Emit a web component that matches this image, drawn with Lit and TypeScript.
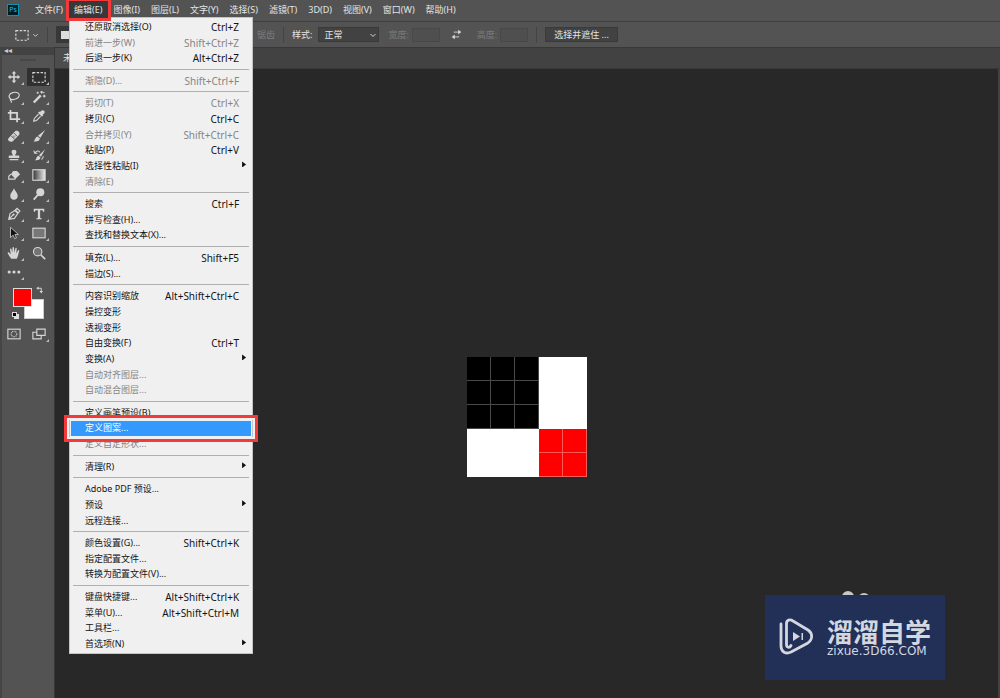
import { LitElement, html, svg, css, nothing } from "lit";
import { customElement, property } from "lit/decorators.js";
import { classMap } from "lit/directives/class-map.js";

interface Command {
  label: string;
  keys?: string;
  off?: boolean;
  sub?: boolean;
  active?: boolean;
}

const titles = ["文件(F)", "编辑(E)", "图像(I)", "图层(L)", "文字(Y)", "选择(S)", "滤镜(T)", "3D(D)", "视图(V)", "窗口(W)", "帮助(H)"];

const groups: Command[][] = [
  [
    { label: "还原取消选择(O)", keys: "Ctrl+Z" },
    { label: "前进一步(W)", keys: "Shift+Ctrl+Z", off: true },
    { label: "后退一步(K)", keys: "Alt+Ctrl+Z" },
  ],
  [{ label: "渐隐(D)...", keys: "Shift+Ctrl+F", off: true }],
  [
    { label: "剪切(T)", keys: "Ctrl+X", off: true },
    { label: "拷贝(C)", keys: "Ctrl+C" },
    { label: "合并拷贝(Y)", keys: "Shift+Ctrl+C", off: true },
    { label: "粘贴(P)", keys: "Ctrl+V" },
    { label: "选择性粘贴(I)", sub: true },
    { label: "清除(E)", off: true },
  ],
  [
    { label: "搜索", keys: "Ctrl+F" },
    { label: "拼写检查(H)..." },
    { label: "查找和替换文本(X)..." },
  ],
  [{ label: "填充(L)...", keys: "Shift+F5" }, { label: "描边(S)..." }],
  [
    { label: "内容识别缩放", keys: "Alt+Shift+Ctrl+C" },
    { label: "操控变形" },
    { label: "透视变形" },
    { label: "自由变换(F)", keys: "Ctrl+T" },
    { label: "变换(A)", sub: true },
    { label: "自动对齐图层...", off: true },
    { label: "自动混合图层...", off: true },
  ],
  [
    { label: "定义画笔预设(B)" },
    { label: "定义图案...", active: true },
    { label: "定义自定形状...", off: true },
  ],
  [{ label: "清理(R)", sub: true }],
  [{ label: "Adobe PDF 预设..." }, { label: "预设", sub: true }, { label: "远程连接..." }],
  [
    { label: "颜色设置(G)...", keys: "Shift+Ctrl+K" },
    { label: "指定配置文件..." },
    { label: "转换为配置文件(V)..." },
  ],
  [
    { label: "键盘快捷键...", keys: "Alt+Shift+Ctrl+K" },
    { label: "菜单(U)...", keys: "Alt+Shift+Ctrl+M" },
    { label: "工具栏..." },
    { label: "首选项(N)", sub: true },
  ],
];

/* Glyphs are drawn on a 16 by 16 grid; classes f and s mean filled and stroked. */
const glyphs: Record<string, unknown> = {
  move: svg`<path class="f" d="M8 1l2.600 3H8.900v3.100H12V5.400L15 8l-3 2.600V8.900H8.900V12h1.700L8 15l-2.600-3h1.700V8.900H4v1.700L1 8l3-2.600v1.700h3.100V4H5.400z"/>`,
  marquee: svg`<rect class="s" x="1" y="3" width="14" height="11" stroke-dasharray="2.800 1.600"/>`,
  lasso: svg`<path class="s" d="M4.500 10.500C1 8.600 2 4.300 6.500 3 11 1.800 14.500 3.600 14 6.500c-.5 3-5.200 5.200-9 4.200-1.700-.4-1.400 1.300-.6 1.500.9.300.9 1.400.2 2.200"/>`,
  wand: svg`<path class="f" d="M1 13.300L9 5.200 11 7.200 3 15.200z"/><path class="s" d="M11 1v3M9.500 2.500h3M14 5.500v3M12.500 7h3M6.500 2v2.400M5.300 3.200h2.400M13 3.500l1-1"/>`,
  crop: svg`<path class="s b" d="M4 1v10.500h11M1 4.500h10.500V15"/>`,
  dropper: svg`<path class="f" d="M10 2.600c1.300-1.700 3-1.500 3.900-.7.900.9.900 2.500-.7 3.700l-1 1 .6.700-1.500 1.500-4.500-4.500 1.500-1.500.7.700z"/><path class="s" d="M7.400 6L2.700 10.800 2 13.900l3.200-.8 4.600-4.700"/>`,
  heal: svg`<path class="f" d="M1.700 10.700l7.600-8.200c2.800-1.700 6 1.300 4.700 4l-7.700 7.700c-3.200 1.300-6.300-1-4.600-3.500z"/><path class="k" d="M4.700 7.800l4 4M7.800 4.500l4 4M7 7.600v1.200M9 7.600v1.200M8 9.500v1"/>`,
  brush: svg`<path class="f" d="M15 1L9.600 10 6.900 7.800zM6.300 8.500l2.600 2.200c.1 2.900-2.900 4.300-7.400 3.500 2.300-.8 1.600-4.700 4.800-5.700z"/>`,
  stamp: svg`<path class="f" d="M6.700 8.700c.2-1.300-1.500-2.600-1.500-4.200C5.200 3 6.400 2 8 2s2.800 1 2.800 2.500c0 1.600-1.700 2.900-1.500 4.200h3.900c.6 0 .8.400.8.800v2H2v-2c0-.5.300-.8.800-.8zM3 12.500h10V14H3z"/>`,
  history: svg`<path class="f" d="M15 1.500L10.300 10 8 8.200zM7.400 8.800l2.200 1.800c.1 2.500-2 4-6.400 3.400 2-.7 1.600-4.500 4.200-5.200z"/><path class="s" d="M2 3l1.200 3h3M3.200 6C5 2.800 8 2.600 9 5M12.800 9.500c0 2-.8 3-2 3.700"/>`,
  eraser: svg`<path class="f" d="M7 3.500h4.500L15 7 9.500 12.500 4.500 7z"/><path class="s" d="M4.500 7L2 9.500v3.200h7l.8-.8"/>`,
  gradient: svg`<defs><linearGradient id="fade"><stop offset="0" stop-color="#333"/><stop offset="1" stop-color="#eee"/></linearGradient></defs><rect class="s" x="1" y="2" width="14" height="12" style="fill:url(#fade)"/>`,
  blur: svg`<path class="f" d="M8 1.500c1 3 4.300 5.700 4.300 8.500S10.300 14.500 8 14.500 3.700 12.800 3.700 10 7 4.500 8 1.500z"/>`,
  dodge: svg`<circle class="f" cx="9.500" cy="6" r="4.600"/><path class="s b" d="M6.500 9.300L2 14.500"/>`,
  pen: svg`<path class="s" d="M2 14l1.500-6.500L9 4l3.300 3.400L8.500 13zM2 14l5-5M9.600 3.400L11.500 1.500l3.200 3.200-1.900 2z"/><circle class="f" cx="7.600" cy="8.600" r="1.200"/>`,
  type: svg`<path class="f" d="M2 2h12v3.500h-1.300c-.1-1.300-.6-1.900-1.900-1.900H9.300v8c0 1 .3 1.200 1.700 1.200V14H5v-1.200c1.400 0 1.700-.2 1.700-1.200v-8H5.200c-1.300 0-1.800.6-1.900 1.900H2z"/>`,
  select: svg`<path d="M4 1.500v11.700l3-2.700 1.800 4 2-.9L9 9.700h4z" fill="#111" stroke="#d6d6d6" stroke-width=".9"/>`,
  shape: svg`<rect class="s" x="1" y="2.500" width="14" height="11" style="fill:#777"/>`,
  hand: svg`<path class="f" d="M4.800 14.500C3 12 1.700 10.200.8 8.300c-.3-1 .8-1.500 1.500-.8l2 2.300-.9-6c0-1.200 1.300-1.300 1.600-.3L6 7.800 6.300 2c.1-1.100 1.500-1.100 1.700 0l.4 5.700 1.200-5c.3-1.100 1.600-.8 1.500.3l-.5 5.500 1.900-3.500c.6-.9 1.700-.3 1.400.7-.8 3-1.200 6.600-2.900 8.800z"/>`,
  zoom: svg`<circle class="s" cx="6.500" cy="6.500" r="4.800" style="fill:#737373"/><path class="s b" d="M10 10l5 5"/>`,
  more: svg`<circle class="f" cx="2.500" cy="8" r="1.800"/><circle class="f" cx="8" cy="8" r="1.800"/><circle class="f" cx="13.500" cy="8" r="1.800"/>`,
  mask: svg`<rect class="s" x="1" y="2.500" width="14" height="11"/><circle class="s" cx="8" cy="8" r="3.200" stroke-dasharray="1 .8"/>`,
  screen: svg`<path class="s" d="M5.500 2.500H15v7H5.500zM5 6H1v7.500h9.500V10"/>`,
  swap: svg`<path class="s b" d="M3 4.500h7.500V11"/><path class="f" d="M5 1v7L.5 4.500zM7 10h7l-3.500 5z"/>`,
  arrows: svg`<path class="s" d="M4 4.500h9M12 11.500H3"/><path class="f" d="M10.500 1l4.500 3.500L10.500 8zM5.500 8L1 11.500 5.500 15z"/>`,
  chevron: svg`<path class="s b" d="M3 6l5 5 5-5"/>`,
};

const tools = [
  ["move", "移动"], ["marquee", "矩形选框"], ["lasso", "套索"], ["wand", "魔棒"],
  ["crop", "裁剪"], ["dropper", "吸管"], ["heal", "修复画笔"], ["brush", "画笔"],
  ["stamp", "仿制图章"], ["history", "历史记录画笔"], ["eraser", "橡皮擦"], ["gradient", "渐变"],
  ["blur", "模糊"], ["dodge", "减淡"], ["pen", "钢笔"], ["type", "横排文字"],
  ["select", "路径选择"], ["shape", "矩形"], ["hand", "抓手"], ["zoom", "缩放"], ["more", "编辑工具栏"],
];

const glyphStyles = css`
  .glyph { display: block; width: 14px; height: 14px; flex: none; }
  .glyph.small { width: 8px; height: 8px; }
  .f { fill: #d6d6d6; }
  .s { fill: none; stroke: #d6d6d6; stroke-width: 1.3; }
  .b { stroke-width: 2; }
  .k { fill: none; stroke: #535353; stroke-width: 1; }
  button, select, input { font: inherit; color: inherit; margin: 0; padding: 0; border: 0; background: none; box-sizing: border-box; }
`;

const glyph = (name: string, small = false) =>
  html`<svg class=${classMap({ glyph: true, small })} viewBox="0 0 16 16" aria-hidden="true">${glyphs[name]}</svg>`;

@customElement("edit-menu")
class EditMenu extends LitElement {
  static styles = [glyphStyles, css`
    :host {
      display: flex; flex-direction: column; box-sizing: border-box;
      width: 184px; max-height: calc(100vh - 61px); padding: 1px;
      background: #f0f0f0; border: 1px solid #c4c4c4; color: #141414;
    }
    .command {
      flex: 0 1 16px; min-height: 0; position: relative;
      display: flex; justify-content: space-between; align-items: center;
      padding: 0 12px 0 14px; line-height: 14px; text-align: left; white-space: nowrap;
    }
    .command:disabled { color: #858585; }
    .keys { font-size: 10px; }
    .active { background: #3399ff; color: #fff; z-index: 1; }
    .active::after {
      content: ""; position: absolute; inset: -6px -7px;
      border: 3px solid #f23a3a; box-shadow: inset 0 0 0 2px #f0f0f0; pointer-events: none;
    }
    .arrow { width: 4px; height: 6px; margin: 0 -7px 3px 0; background: #111; clip-path: polygon(0 0, 100% 50%, 0 100%); }
    .line { flex: 0 1 7px; min-height: 0; margin: 0 2px; border: 0; display: flex; align-items: center; }
    .line::before { content: ""; flex: 1; height: 1px; background: #b0b0b0; }
  `];

  render() {
    return groups.map((group, i) => html`
      ${i ? html`<hr class="line">` : nothing}
      ${group.map(c => html`
        <button class=${classMap({ command: true, active: !!c.active })} role="menuitem" ?disabled=${c.off}>
          <span>${c.label}</span>
          ${c.keys ? html`<span class="keys">${c.keys}</span>` : nothing}
          ${c.sub ? html`<span class="arrow"></span>` : nothing}
        </button>`)}
    `);
  }
}

@customElement("tool-panel")
class ToolPanel extends LitElement {
  @property() current = "marquee";

  static styles = [glyphStyles, css`
    :host { display: block; background: #535353; border-left: 2px solid #454545; border-right: 1px solid #383838; box-sizing: border-box; width: 55px; }
    .head { height: 8px; background: #424242; color: #ccc; font-size: 8px; line-height: 6px; padding-left: 2px; }
    .grip { width: 16px; height: 2px; margin: 4px auto 7px; background: #484848; }
    .tools { display: grid; grid-template-columns: 25px 25px; grid-auto-rows: 20px 19px; }
    .tool { position: relative; display: grid; place-items: center; width: 23px; height: 18px; border-radius: 1px; }
    .tool.on { background: #303030; }
    .tool.fly::after { content: ""; position: absolute; right: 1px; bottom: 1px; width: 3px; height: 3px; background: #bbb; clip-path: polygon(100% 0, 100% 100%, 0 100%); }
    .colors { display: grid; grid-template: 11px 8px 12px / 11px 8px 12px; margin: 5px 0 6px 11px; width: 31px; position: relative; }
    .back { grid-area: 2 / 2 / 4 / 4; background: #fff; border: 1px solid #ccc; }
    .fore { grid-area: 1 / 1 / 3 / 3; background: #f00; border: 1px solid #ddd; z-index: 1; }
    .swap { position: absolute; left: 23px; top: -2px; }
    .reset { position: absolute; left: -1px; top: 24px; width: 5px; height: 5px; background: #000; border: 1px solid #ddd; box-shadow: 2px 2px 0 #ddd; }
    .modes { display: grid; grid-template-columns: 25px 25px; }
  `];

  render() {
    return html`
      <div class="head">◂◂</div>
      <div class="grip"></div>
      <div class="tools">
        ${tools.map(([name, label]) => html`
          <button class=${classMap({ tool: true, on: name === this.current, fly: name !== "zoom" })} aria-label=${label}>${glyph(name)}</button>`)}
      </div>
      <div class="colors">
        <button class="fore" aria-label="前景色"></button>
        <button class="back" aria-label="背景色"></button>
        <button class="swap" aria-label="切换颜色">${glyph("swap", true)}</button>
        <button class="reset" aria-label="默认颜色"></button>
      </div>
      <div class="modes">
        <button class="tool" aria-label="快速蒙版">${glyph("mask")}</button>
        <button class="tool fly" aria-label="屏幕模式">${glyph("screen")}</button>
      </div>`;
  }
}

@customElement("app-root")
class AppRoot extends LitElement {
  static styles = [glyphStyles, css`
    :host {
      display: grid; grid-template-rows: 21px 26px 1fr; min-height: 100vh; position: relative; overflow: hidden;
      background: #282828; color: #e4e4e4; font: 9px "Noto Sans", "Noto Sans CJK SC", sans-serif;
    }
    .menubar { display: flex; align-items: center; background: #535353; padding-left: 7px; white-space: nowrap; }
    .logo { width: 12px; height: 12px; box-sizing: border-box; border: 1px solid #0a93b8; background: #001d26; color: #19c4ef; font-size: 7px; line-height: 9px; text-align: center; margin: 0 11px 2px 0; }
    .entry { position: relative; }
    .title { height: 17px; padding: 0 6px 0 5px; display: block; line-height: 16px; margin-bottom: 2px; }
    .title.open { background: #383838; outline: 3px solid #f23a3a; position: relative; z-index: 3; }
    .menu { position: absolute; left: 0; top: 16px; z-index: 2; }
    .options { display: flex; align-items: center; background: #535353; border-top: 1px solid #3f3f3f; box-sizing: border-box; padding-left: 15px; white-space: nowrap; }
    .preset { display: flex; align-items: center; gap: 3px; }
    .preset .small { width: 7px; }
    .split { width: 1px; height: 16px; background: #444; margin: 0 8px; }
    .modes { display: flex; gap: 4px; width: 201px; }
    .mode { width: 17px; height: 17px; background: #383838; display: grid; place-items: center; }
    .mode::before { content: ""; width: 8px; height: 8px; background: #ddd; }
    .dim { color: #7b7b7b; }
    .style { position: relative; display: flex; align-items: center; margin: 0 9px 0 6px; }
    .style .glyph { position: absolute; right: 2px; top: 4px; pointer-events: none; }
    .pick { appearance: none; width: 61px; height: 15px; background: #424242; border: 1px solid #3a3a3a; padding-left: 5px; line-height: 13px; }
    .field { width: 28px; height: 14px; border: 1px solid #484848; background: #4f4f4f; margin-left: 3px; }
    .swap { margin: 0 15px 0 11px; }
    .swap .glyph { width: 11px; height: 11px; }
    .refine { height: 15px; padding: 0 8px; background: #424242; border: 1px solid #3a3a3a; line-height: 13px; }
    .body { display: grid; grid-template-columns: auto 1fr; min-height: 0; }
    .window { display: grid; grid-template-rows: 22px 1fr; }
    .tabs { background: #424242; border-top: 1px solid #383838; border-bottom: 1px solid #383838; box-sizing: border-box; }
    .tab { display: block; width: 180px; height: 20px; background: #4d4d4d; line-height: 20px; padding-left: 8px; text-align: left; }
    .stage { display: grid; place-items: center; padding-top: 66px; border-right: 2px solid #424242; }
    .art { display: grid; grid-template: repeat(5, 24px) / repeat(5, 24px); background: #fff; }
    .ink, .red { display: block; box-sizing: border-box; border: solid #4a4a4a; border-width: 0 1px 1px 0; background: #000; }
    .red { background: #f00; border-color: #ff5a5a; }
    .badge { position: absolute; right: 55px; bottom: 18px; }
    .peek { display: block; width: 28px; height: 4px; margin-left: 77px; }
    .card { width: 180px; height: 85px; box-sizing: border-box; background: #223058; color: #d3d7e0; display: flex; align-items: center; gap: 13px; padding: 0 0 2px 14px; }
    .play { width: 35px; height: 37px; flex: none; }
    .name { font: 700 26px/28px "Noto Sans CJK SC", sans-serif; white-space: nowrap; }
    .site { font: 12px/12px "DejaVu Sans", sans-serif; }
  `];

  render() {
    const cells = Array.from({ length: 25 }, (_, i) => {
      const x = i % 5, y = Math.floor(i / 5);
      return x < 3 && y < 3 ? "ink" : x > 2 && y > 2 ? "red" : "";
    });
    return html`
      <nav class="menubar">
        <span class="logo">Ps</span>
        ${titles.map((t, i) => html`
          <div class="entry">
            <button class=${classMap({ title: true, open: i === 1 })}>${t}</button>
            ${i === 1 ? html`<edit-menu class="menu" role="menu"></edit-menu>` : nothing}
          </div>`)}
      </nav>
      <div class="options">
        <button class="preset" aria-label="工具预设">${glyph("marquee")}${glyph("chevron", true)}</button>
        <span class="split"></span>
        <div class="modes"><button class="mode" aria-label="新选区"></button></div>
        <span class="dim">锯齿</span>
        <span class="split"></span>
        <label for="style">样式:</label>
        <div class="style"><select class="pick" id="style"><option>正常</option></select>${glyph("chevron", true)}</div>
        <label class="dim" for="w">宽度:</label><input class="field" id="w" disabled>
        <button class="swap" aria-label="互换宽高">${glyph("arrows")}</button>
        <label class="dim" for="h">高度:</label><input class="field" id="h" disabled>
        <span class="split"></span>
        <button class="refine">选择并遮住 ...</button>
      </div>
      <div class="body">
        <tool-panel></tool-panel>
        <main class="window">
          <div class="tabs"><button class="tab">未</button></div>
          <div class="stage"><div class="art">${cells.map(c => html`<i class=${c}></i>`)}</div></div>
        </main>
      </div>
      <aside class="badge">
        <svg class="peek" viewBox="0 0 28 4" aria-hidden="true"><circle cx="6" cy="6" r="6" fill="#c8c8c8"/><circle cx="22" cy="8" r="6" fill="#c8c8c8"/></svg>
        <div class="card">
          <svg class="play" viewBox="0 0 35 37" aria-hidden="true">
            <g fill="none" stroke="#d3d7e0" stroke-width="2.800" stroke-linecap="round" stroke-linejoin="round">
              <path d="M2 6v22c0 6 5 8.500 10 6l16-8.500c6-3.500 6-10 1-13.500L14 3c-3-2-6.500-1-6.500 2.500v21c0 3 3 4 4.500 1"/>
            </g>
            <path d="M14 14l7 4.500-7 4.500zM22.500 15H24v7h-1.500z" fill="#d3d7e0"/>
          </svg>
          <div><div class="name">溜溜自学</div><div class="site">zixue.3D66.COM</div></div>
        </div>
      </aside>`;
  }
}
